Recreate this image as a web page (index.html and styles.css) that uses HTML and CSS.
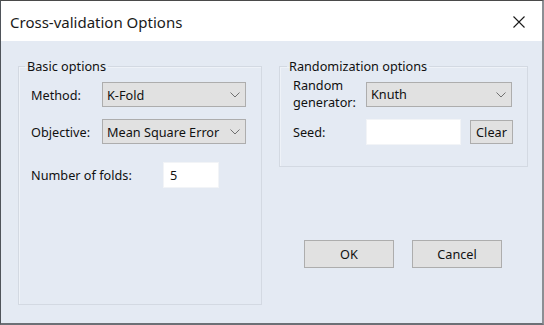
FILE: index.html
```html
<!DOCTYPE html>
<html lang="en">
<head>
    <meta charset="UTF-8">
    <title>Cross-validation Options</title>
    <link rel="stylesheet" href="styles.css">
</head>
<body>
    <div class="window">
        <!-- Заголовок окна -->
        <div class="titlebar">
            <span class="title">Cross-validation Options</span>
            <span class="close">
                <svg width="12" height="12" viewBox="0 0 12 12"><path d="M0.5 0.5 L11.5 11.5 M11.5 0.5 L0.5 11.5" stroke="#1a1a1a" stroke-width="1.1" fill="none"/></svg>
            </span>
        </div>

        <div class="client">
            <fieldset class="group group-basic">
                <legend>Basic options</legend>
                <div class="row">
                    <span class="label label-method">Method:</span>
                    <div class="select select-method">K-Fold<svg class="chevron" width="10" height="6" viewBox="0 0 10 6"><path d="M0.5 0.5 L5 5 L9.5 0.5" stroke="#707070" fill="none"/></svg></div>
                </div>
                <div class="row row-objective">
                    <span class="label label-method">Objective:</span>
                    <div class="select select-method">Mean Square Error<svg class="chevron" width="10" height="6" viewBox="0 0 10 6"><path d="M0.5 0.5 L5 5 L9.5 0.5" stroke="#707070" fill="none"/></svg></div>
                </div>
                <div class="row row-folds">
                    <span class="label label-folds">Number of folds:</span>
                    <div class="input input-folds">5</div>
                </div>
            </fieldset>

            <div class="right-column">
                <fieldset class="group group-random">
                    <legend>Randomization options</legend>
                    <div class="row row-generator">
                        <span class="label label-random label-two-lines"><span class="line">Random</span><span class="line">generator:</span></span>
                        <div class="select select-random">Knuth<svg class="chevron" width="10" height="6" viewBox="0 0 10 6"><path d="M0.5 0.5 L5 5 L9.5 0.5" stroke="#707070" fill="none"/></svg></div>
                    </div>
                    <div class="row row-seed">
                        <span class="label label-random">Seed:</span>
                        <div class="input input-seed"></div>
                        <button class="button button-clear">Clear</button>
                    </div>
                </fieldset>

                <div class="button-container">
                    <button class="button button-dialog">OK</button>
                    <button class="button button-dialog">Cancel</button>
                </div>
            </div>
        </div>
    </div>
</body>
</html>
```

FILE: styles.css
```css
body {
    margin: 0;
    padding: 0;
    font-family: "Noto Sans", "Open Sans", sans-serif;
    font-size: 12.7px;
    color: #111;
    background: #fff;
}

.window {
    box-sizing: border-box;
    width: 544px;
    height: 325px;
    display: flex;
    flex-direction: column;
    border-top: 1px solid #4a4a4a;
    border-left: 1px solid #4f545a;
    border-right: 2px solid #8c8f94;
    border-bottom: 2px solid #6c7076;
    overflow: hidden;
}

/* Заголовок */
.titlebar {
    height: 40px;
    flex-shrink: 0;
    background: #fff;
    display: flex;
    align-items: center;
    justify-content: space-between;
    padding: 0 17px 0 9px;
}

.title {
    font-size: 15px;
    color: #1a1a1a;
    margin-top: 1px;
}

.close {
    display: flex;
    margin-top: 1px;
}

.client {
    flex: 1;
    background: #e4eaf3;
    display: flex;
    align-items: flex-start;
    padding: 16px 0 0 17px;
    gap: 17px;
}

/* Группы */
.group {
    margin: 0;
    padding: 0 12px 0 12px;
    border: 1px solid #d3d9e2;
    box-shadow: inset 1px 1px 0 #eef2f8;
}

.group legend {
    padding: 0 2px;
    margin-left: -6px;
    line-height: 18px;
}

.group-basic {
    width: 244px;
    height: 248px;
    box-sizing: border-box;
}

.group-random {
    width: 249px;
    box-sizing: border-box;
    padding: 0 13px 21px 13px;
}

.row {
    display: flex;
    align-items: center;
    margin-top: 7px;
}

.row-generator {
    margin-top: 2px;
}

.row-objective {
    margin-top: 12px;
}

.row-folds {
    margin-top: 18px;
}

.row-seed {
    margin-top: 8px;
}

.label {
    flex-shrink: 0;
}

.label-method {
    width: 71px;
}

.label-folds {
    width: 132px;
}

.label-random {
    width: 73px;
}

.label-two-lines {
    display: flex;
    flex-direction: column;
    line-height: 17px;
}

/* Выпадающие списки */
.select {
    box-sizing: border-box;
    height: 25px;
    background: #e1e1e1;
    border: 1px solid #adadad;
    display: flex;
    align-items: center;
    justify-content: space-between;
    padding: 0 5px 0 4px;
    white-space: nowrap;
}

.select-method {
    width: 144px;
}

.select-random {
    width: 146px;
}

.chevron {
    flex-shrink: 0;
    margin-top: 1px;
}

.input {
    box-sizing: border-box;
    height: 26px;
    background: #fff;
    border: 1px solid #f2f4f7;
    padding: 0 6px;
    display: flex;
    align-items: center;
}

.input-folds {
    width: 56px;
}

.input-seed {
    width: 95px;
}

.button {
    font-family: inherit;
    font-size: 12.7px;
    color: #111;
    background: #e1e1e1;
    border: 1px solid #adadad;
    padding: 0;
    box-sizing: border-box;
}

.button-clear {
    width: 43px;
    height: 24px;
    margin-left: 9px;
}

.button-container {
    display: flex;
    gap: 18px;
    margin: 73px 0 0 25px;
}

.button-dialog {
    width: 90px;
    height: 28px;
}
```
